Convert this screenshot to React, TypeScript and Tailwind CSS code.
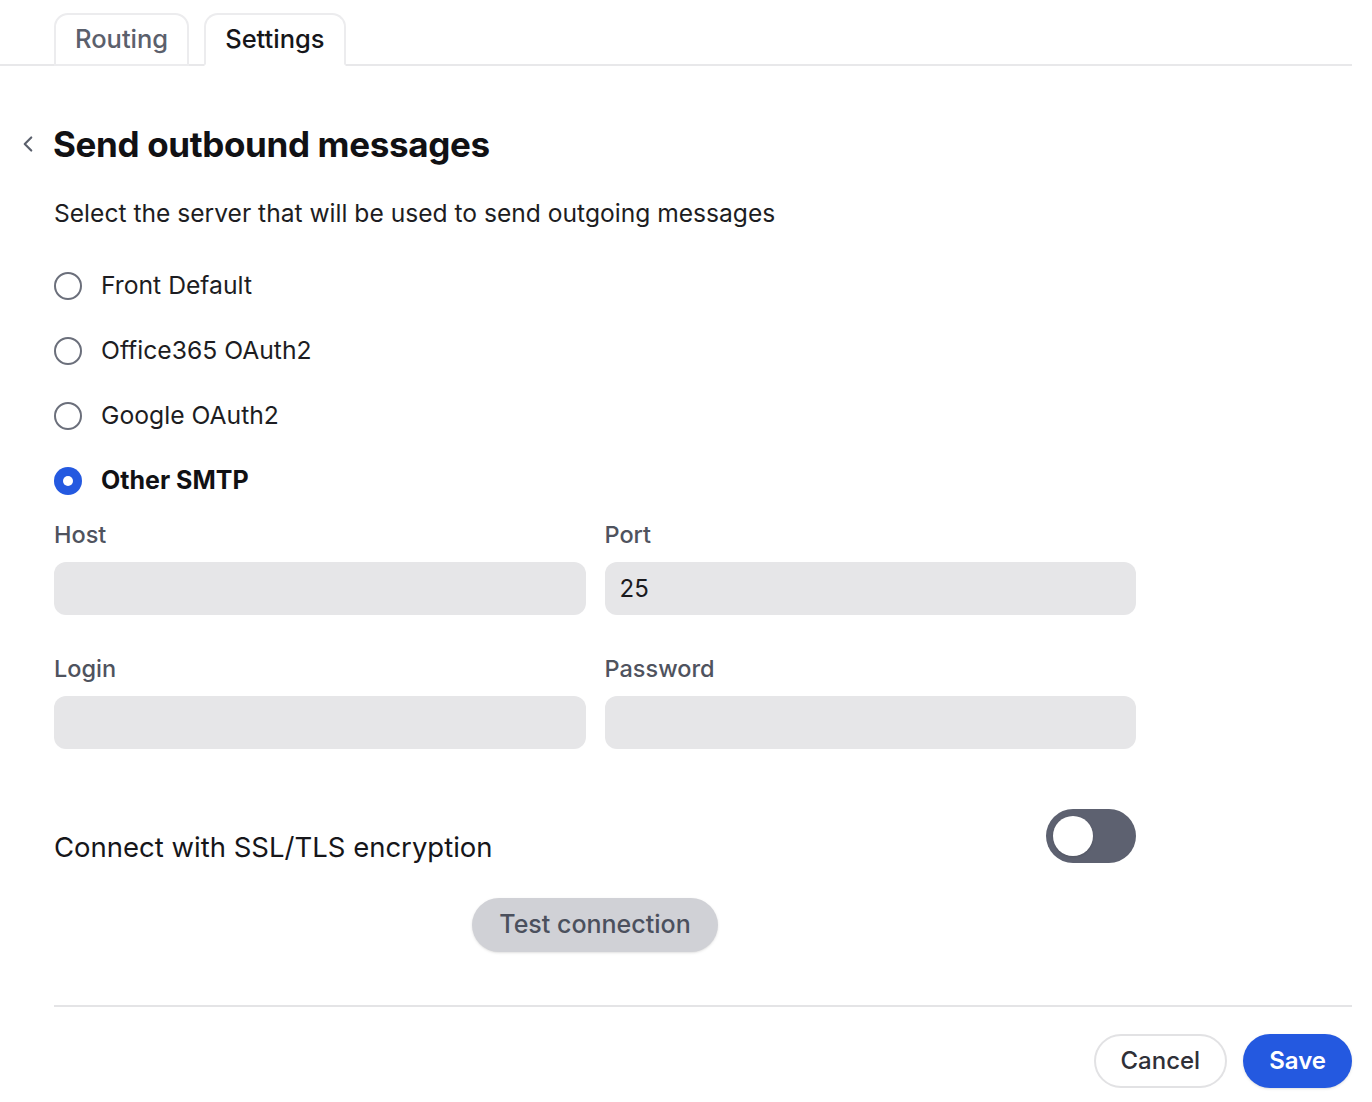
import { ChevronLeft } from "lucide-react";

const options = [
  { label: "Front Default", checked: false },
  { label: "Office365 OAuth2", checked: false },
  { label: "Google OAuth2", checked: false },
  { label: "Other SMTP", checked: true },
];

function Field({ label, value = "" }: { label: string; value?: string }) {
  return (
    <div className="flex flex-col">
      <label className="text-[23.5px] font-medium leading-[30px] text-[#4f535e]">{label}</label>
      <div className="mt-[12px] flex h-[53px] items-center rounded-[12px] bg-[#e6e6e8] px-[15px] text-[24px] text-[#1a1a1e]">
        {value}
      </div>
    </div>
  );
}

export default function App() {
  return (
    <main className="min-h-screen w-[1372px] bg-white text-[#16161a]" style={{ fontFamily: "Inter, 'Noto Sans', sans-serif" }}>
      <nav className="flex w-[1352px] items-end gap-[15px] border-b-2 border-[#e8e8ea] pl-[54px] pt-[13px]">
        <button className="-mb-[2px] h-[53px] rounded-t-[14px] border-2 border-[#ececee] px-[19px] text-[25.5px] font-medium text-[#5b606c]">
          Routing
        </button>
        <button className="-mb-[2px] h-[53px] rounded-t-[14px] border-2 border-b-white border-[#ececee] bg-white px-[19px] text-[25.5px] font-medium text-[#16161a]">
          Settings
        </button>
      </nav>

      <section className="w-[1352px] pt-[56px]">
        <div className="flex items-center">
          <ChevronLeft className="ml-[15px] h-[26px] w-[26px] text-[#5b606c]" strokeWidth={2} />
          <h1 className="ml-[12px] text-[35px] font-bold leading-[44px] tracking-[-0.01em] text-[#111114]">Send outbound messages</h1>
        </div>

        <div className="pl-[54px]">
          <p className="mt-[31px] text-[24.6px] leading-[32px] text-[#1d1d22]">Select the server that will be used to send outgoing messages</p>

          <div className="mt-[41px] flex flex-col gap-[33px]">
            {options.map((o) => (
              <label key={o.label} className="flex h-[32px] items-center">
                {o.checked ? (
                  <span className="flex h-[28px] w-[28px] items-center justify-center rounded-full bg-[#2459e0]">
                    <span className="h-[10px] w-[10px] rounded-full bg-white" />
                  </span>
                ) : (
                  <span className="h-[28px] w-[28px] rounded-full border-2 border-[#6b6f7b] bg-white" />
                )}
                <span className={`ml-[19px] ${o.checked ? "text-[25px] font-bold text-[#111114]" : "text-[24.7px] text-[#1d1d22]"}`}>{o.label}</span>
              </label>
            ))}
          </div>

          <div className="mt-[23px] grid w-[1082px] grid-cols-2 gap-x-[19px] gap-y-[39px]">
            <Field label="Host" />
            <Field label="Port" value="25" />
            <Field label="Login" />
            <Field label="Password" />
          </div>

          <div className="mt-[58px] flex w-[1082px] items-center justify-between">
            <span className="mt-[22px] text-[27.5px] leading-[36px] text-[#16161a]">Connect with SSL/TLS encryption</span>
            <span className="flex h-[54px] w-[90px] items-center rounded-full bg-[#5d6170] px-[7px]">
              <span className="h-[40px] w-[40px] rounded-full bg-white shadow" />
            </span>
          </div>

          <div className="mt-[33px] flex w-[1082px] justify-center">
            <button className="h-[54px] rounded-full bg-[#d0d1d6] px-[27px] text-[25px] font-medium text-[#4b505d] shadow-sm">
              Test connection
            </button>
          </div>

          <div className="mt-[53px] border-t-2 border-[#e4e4e6]" />

          <div className="mt-[27px] flex justify-end gap-[16px]">
            <button className="h-[54px] rounded-full border-2 border-[#e2e2e4] bg-white px-[25px] text-[24px] font-medium text-[#2f3038]">
              Cancel
            </button>
            <button className="h-[54px] rounded-full bg-[#2459e0] px-[26px] text-[24px] font-semibold text-white shadow-sm">
              Save
            </button>
          </div>
        </div>
      </section>
    </main>
  );
}
